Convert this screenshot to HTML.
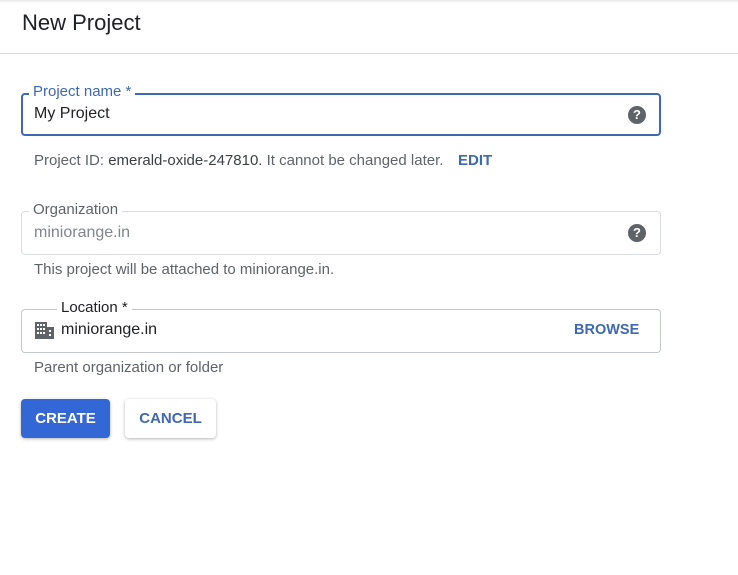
<!DOCTYPE html>
<html><head><style>
body{margin:0;width:738px;height:575px;background:#fff;font-family:"Liberation Sans",sans-serif;position:relative;overflow:hidden}
.abs{position:absolute}
.topsh{left:0;top:0;width:738px;height:3px;background:linear-gradient(#e6e6e6,#fff)}
.title{left:22px;top:10px;font-size:22px;color:#202124}
.hr{left:0;top:53px;width:738px;height:1px;background:#dcdcdc}
.box{border:1px solid #dadce0;border-radius:4px;box-sizing:border-box}
.lab{background:#fff;padding:0 4px;font-size:15px}
.help{width:18px;height:18px;border-radius:50%;background:#5f6368;color:#fff;font-size:13px;font-weight:bold;text-align:center;line-height:18px}
.hint{font-size:15px;color:#5f6368}
</style></head><body>
<div class="abs topsh"></div>
<div class="abs title">New Project</div>
<div class="abs hr"></div>

<div class="abs box" style="left:21px;top:93px;width:640px;height:43px;border:2px solid #3e68b0"></div>
<div class="abs lab" style="left:29px;top:83px;color:#3e68b0">Project name *</div>
<div class="abs" style="left:34px;top:105px;font-size:16px;color:#202124">My Project</div>
<div class="abs help" style="left:628px;top:106px">?</div>
<div class="abs hint" style="left:34px;top:152px;white-space:nowrap">Project ID: <span style="color:#3c4043">emerald-oxide-247810.</span> It cannot be changed later.</div>
<div class="abs" style="left:458px;top:152px;font-size:15px;color:#3e68b0;font-weight:bold">EDIT</div>

<div class="abs box" style="left:21px;top:211px;width:640px;height:44px"></div>
<div class="abs lab" style="left:29px;top:201px;color:#5f6368">Organization</div>
<div class="abs" style="left:34px;top:224px;font-size:16px;color:#80868b">miniorange.in</div>
<div class="abs help" style="left:628px;top:224px">?</div>
<div class="abs hint" style="left:34px;top:261px">This project will be attached to miniorange.in.</div>

<div class="abs box" style="left:21px;top:309px;width:640px;height:44px;border-color:#c4c7cc"></div>
<div class="abs lab" style="left:57px;top:299px;color:#202124">Location *</div>
<svg class="abs" style="left:35px;top:322px" width="19" height="17" viewBox="0 0 19 17"><rect x="0" y="0" width="12" height="17" fill="#5f6368"/><rect x="12" y="5" width="7" height="12" fill="#5f6368"/><g fill="#fff"><rect x="2" y="2" width="2" height="2"/><rect x="5" y="2" width="2" height="2"/><rect x="8" y="2" width="2" height="2"/><rect x="2" y="6" width="2" height="2"/><rect x="5" y="6" width="2" height="2"/><rect x="8" y="6" width="2" height="2"/><rect x="2" y="10" width="2" height="2"/><rect x="5" y="10" width="2" height="2"/><rect x="8" y="10" width="2" height="2"/><rect x="14" y="8" width="2" height="2"/><rect x="14" y="12" width="2" height="2"/></g></svg>
<div class="abs" style="left:61px;top:321px;font-size:16px;color:#202124">miniorange.in</div>
<div class="abs" style="left:574px;top:322px;font-size:14.5px;color:#3e68b0;font-weight:bold">BROWSE</div>
<div class="abs hint" style="left:34px;top:359px">Parent organization or folder</div>

<div class="abs" style="left:21px;top:399px;width:89px;height:39px;background:#3367d6;border-radius:4px;box-shadow:0 1px 3px rgba(0,0,0,.3);color:#fff;font-size:15px;font-weight:bold;text-align:center;line-height:39px">CREATE</div>
<div class="abs" style="left:125px;top:399px;width:91px;height:39px;background:#fff;border-radius:4px;box-shadow:0 1px 3px rgba(0,0,0,.3);color:#3e68b0;font-size:15px;font-weight:bold;text-align:center;line-height:39px">CANCEL</div>
</body></html>
